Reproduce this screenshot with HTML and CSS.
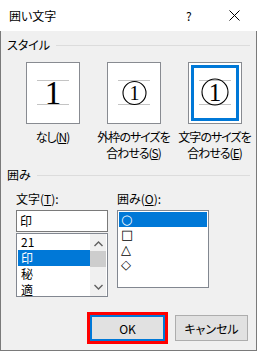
FILE: index.html
```html
<!DOCTYPE html>
<html lang="ja">
<head>
<meta charset="utf-8">
<link rel="stylesheet" href="styles.css">
</head>
<body>
<div class="window">
  <div class="titlebar">
    <span class="title">囲い文字</span>
    <span class="help">?</span>
    <svg class="close" width="11" height="11" viewBox="0 0 11 11"><path d="M0.5 0.5L10.5 10.5M10.5 0.5L0.5 10.5" stroke="#000" stroke-width="1" fill="none"/></svg>
  </div>
  <div class="content">
    <div class="group-head"><span>スタイル</span><i class="rule"></i></div>
    <div class="styles">
      <div class="style-opt">
        <div class="preview">
          <svg width="52" height="60" viewBox="0 0 52 60">
            <path d="M10 17.5H42M10 41.5H42" stroke="#c4c4c4" stroke-width="1"/>
            <text x="26" y="41" text-anchor="middle" class="glyph" font-size="33">1</text>
          </svg>
        </div>
        <div class="label">なし(<u>N</u>)</div>
      </div>
      <div class="style-opt">
        <div class="preview">
          <svg width="52" height="60" viewBox="0 0 52 60">
            <path d="M10 17.5H42M10 41.5H42" stroke="#c4c4c4" stroke-width="1"/>
            <circle cx="26.5" cy="30" r="11.5" fill="none" stroke="#000" stroke-width="1.1"/>
            <text x="26.5" y="37" text-anchor="middle" class="glyph" font-size="20">1</text>
          </svg>
        </div>
        <div class="label">外枠のサイズを<br>合わせる(<u>S</u>)</div>
      </div>
      <div class="style-opt">
        <div class="preview selected">
          <svg width="52" height="60" viewBox="0 0 52 60">
            <path d="M10 17.5H42M10 41.5H42" stroke="#c4c4c4" stroke-width="1"/>
            <circle cx="26" cy="29" r="13" fill="none" stroke="#000" stroke-width="1.1"/>
            <text x="26" y="38" text-anchor="middle" class="glyph" font-size="25">1</text>
          </svg>
        </div>
        <div class="label">文字のサイズを<br>合わせる(<u>E</u>)</div>
      </div>
    </div>
    <div class="group-head second"><span>囲み</span><i class="rule"></i></div>
    <div class="fields">
      <div class="field">
        <div class="field-label">文字(<u>T</u>):</div>
        <div class="input">印</div>
        <div class="list list-chars">
          <div class="items">
            <div class="item">21</div>
            <div class="item sel">印</div>
            <div class="item">秘</div>
            <div class="item">適</div>
          </div>
          <div class="scrollbar">
            <svg class="arrow" width="9" height="6" viewBox="0 0 9 6"><path d="M0.5 5L4.5 1L8.5 5" stroke="#606060" stroke-width="1.4" fill="none"/></svg>
            <div class="thumb"></div>
            <div class="track"></div>
            <svg class="arrow" width="9" height="6" viewBox="0 0 9 6"><path d="M0.5 1L4.5 5L8.5 1" stroke="#606060" stroke-width="1.4" fill="none"/></svg>
          </div>
        </div>
      </div>
      <div class="field">
        <div class="field-label">囲み(<u>O</u>):</div>
        <div class="list list-shapes">
          <div class="item sel">○</div>
          <div class="item">□</div>
          <div class="item">△</div>
          <div class="item">◇</div>
        </div>
      </div>
    </div>
    <div class="buttons">
      <button class="btn ok">OK</button>
      <button class="btn">キャンセル</button>
    </div>
  </div>
</div>
</body>
</html>
```

FILE: styles.css
```css
* { box-sizing: border-box; }
html, body { margin: 0; padding: 0; }
body {
  font-family: "Noto Sans CJK JP", "Noto Sans", sans-serif;
  font-size: 12px;
  font-feature-settings: "palt";
  color: #000;
  background: #fff;
}
.window {
  width: 257px;
  height: 351px;
  display: flex;
  flex-direction: column;
}
.titlebar {
  height: 31px;
  flex: none;
  background: #fff;
  display: flex;
  align-items: center;
  padding-left: 9px;
}
.title { flex: 1; line-height: 14px; }
.help { width: 6px; margin-right: 37px; line-height: 14px; }
.close { margin-right: 17px; }
.content {
  flex: 1;
  background: #f0f0f0;
  border: 1px solid #7a7a7a;
  border-top: none;
  padding: 0 6px;
  display: flex;
  flex-direction: column;
}
.group-head {
  display: flex;
  align-items: center;
  height: 14px;
  line-height: 14px;
  margin-top: 7px;
}
.group-head.second { margin-top: 7px; }
.rule {
  flex: 1;
  height: 1px;
  background: #dcdcdc;
  margin-left: 6px;
}
.styles {
  display: flex;
  margin-top: 10px;
  margin-left: 5px;
}
.style-opt {
  flex: none;
  width: 81px;
  display: flex;
  flex-direction: column;
  align-items: center;
}
.preview {
  width: 54px;
  height: 62px;
  background: #fff;
  border: 1px solid #888b91;
}
.preview svg { display: block; }
.preview.selected {
  box-shadow: inset 0 0 0 2px #fff, inset 0 0 0 5px #0078d7;
}
.glyph { font-family: "Liberation Serif", serif; fill: #000; }
.label {
  margin-top: 5px;
  line-height: 16px;
  text-align: center;
  white-space: nowrap;
  letter-spacing: -1px;
}
u { text-decoration: underline; text-underline-offset: 1px; }
.fields {
  display: flex;
  gap: 9px;
  margin-left: 9px;
  margin-top: 10px;
}
.field { width: 92px; }
.field-label { line-height: 14px; height: 14px; margin-bottom: 4px; }
.input {
  height: 22px;
  border: 1px solid #7a7a7a;
  background: #fff;
  line-height: 20px;
  padding-left: 3px;
}
.list {
  background: #fff;
  border: 1px solid #828790;
}
.list-chars {
  margin-top: 1px;
  height: 64px;
  display: flex;
  padding: 0 1px 0 1px;
  overflow: hidden;
}
.list-chars .items { flex: 1; }
.item {
  height: 16px;
  line-height: 16px;
  padding-left: 3px;
  white-space: nowrap;
}
.item.sel { background: #0078d7; color: #fff; }
.scrollbar {
  width: 16px;
  display: flex;
  flex-direction: column;
  align-items: center;
  background: #f0f0f0;
}
.arrow { margin-top: 7px; flex: none; }
.thumb { width: 16px; height: 16px; background: #cdcdcd; margin-top: 4px; flex: none; }
.track { flex: 1; }
.scrollbar .arrow:last-child { margin-top: 0; margin-bottom: 6px; }
.list-shapes {
  height: 78px;
  padding: 1px;
}
.list-shapes .item {
  height: 15px;
  line-height: 15px;
  padding-left: 2px;
  font-family: "DejaVu Sans", sans-serif;
  font-size: 13px;
}
.buttons {
  display: flex;
  justify-content: flex-end;
  gap: 10px;
  margin-top: auto;
  margin-bottom: 9px;
  margin-right: 2px;
}
.btn {
  font-family: inherit;
  font-size: 12px;
  font-feature-settings: "palt";
  height: 26px;
  width: 73px;
  background: #e1e1e1;
  border: 1px solid #adadad;
  color: #000;
  padding: 0;
  border-radius: 0;
}
.btn.ok {
  width: 75px;
  border: 2px solid #0078d7;
  outline: 3px solid #ff0000;
  outline-offset: 0;
}
```
